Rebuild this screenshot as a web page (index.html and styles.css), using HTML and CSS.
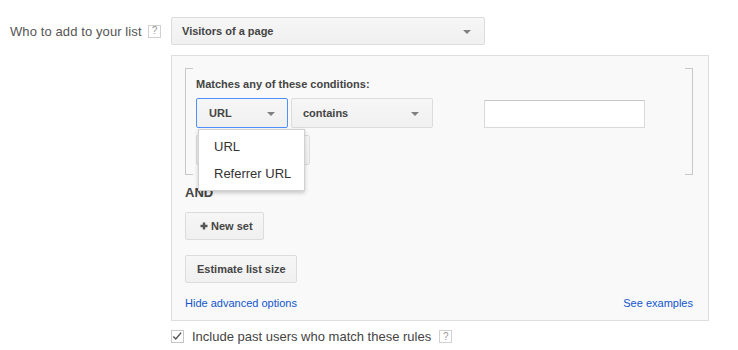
FILE: index.html
```html
<!DOCTYPE html>
<html>
<head>
<meta charset="utf-8">
<link rel="stylesheet" href="styles.css">
</head>
<body>
<div class="top-row">
  <div class="field-label"><span>Who to add to your list</span> <span class="help">?</span></div>
  <div class="select select-main"><span>Visitors of a page</span><span class="arrow"></span></div>
</div>

<div class="panel">
  <div class="rule-set">
    <div class="set-title">Matches any of these conditions:</div>
    <div class="cond-row">
      <div class="dd-wrap">
        <div class="select select-url focused"><span>URL</span><span class="arrow"></span></div>
        <div class="menu">
          <div class="menu-item">URL</div>
          <div class="menu-item">Referrer URL</div>
        </div>
      </div>
      <div class="select select-op"><span>contains</span><span class="arrow"></span></div>
      <input class="text-input" type="text">
    </div>
    <div class="or-row"><div class="btn btn-or"></div></div>
  </div>

  <div class="and-label">AND</div>
  <div class="btn btn-newset"><svg class="plus" width="8" height="8" viewBox="0 0 8 8"><path d="M4 0.5 V7.5 M0.5 4 H7.5" stroke="#555" stroke-width="2.4"/></svg>New set</div>
  <div class="btn btn-estimate">Estimate list size</div>

  <div class="links">
    <a class="link" href="#">Hide advanced options</a>
    <a class="link" href="#">See examples</a>
  </div>
</div>

<div class="check-row">
  <span class="checkbox">
    <svg width="13" height="13" viewBox="0 0 13 13"><path d="M2.5 6.5 L5.2 9.2 L11 2.3" fill="none" stroke="#555" stroke-width="1.6"/></svg>
  </span>
  <span class="check-text">Include past users who match these rules</span>
  <span class="help">?</span>
</div>
</body>
</html>
```

FILE: styles.css
```css
* { box-sizing: border-box; }
body {
  margin: 0;
  padding: 17px 0 0 10px;
  font-family: "Liberation Sans", Arial, sans-serif;
  background: #fff;
  color: #444;
}
.top-row {
  display: grid;
  grid-template-columns: 161px auto;
  align-items: center;
}
.field-label {
  font-size: 13px;
  color: #555;
  display: flex;
  align-items: center;
  justify-content: space-between;
  padding-right: 10px;
  letter-spacing: 0.1px;
}
.help {
  display: inline-flex;
  align-items: center;
  justify-content: center;
  width: 13px;
  height: 13px;
  border: 1px solid #d0d0d0;
  background: #fff;
  color: #999;
  font-size: 10px;
  line-height: 1;
  letter-spacing: 0;
}
.select {
  position: relative;
  display: flex;
  align-items: center;
  height: 28px;
  background: linear-gradient(#f6f6f6, #f0f0f0);
  border: 1px solid #dcdcdc;
  border-radius: 2px;
  font-size: 11px;
  font-weight: bold;
  color: #444;
}
.arrow {
  position: absolute;
  top: 50%;
  margin-top: -1px;
  width: 0;
  height: 0;
  border-left: 4px solid transparent;
  border-right: 4px solid transparent;
  border-top: 4px solid #808080;
}
.select-main { width: 314px; padding-left: 10px; }
.select-main .arrow { right: 13px; }
.panel {
  margin: 10px 0 0 161px;
  width: 538px;
  background: #f9f9f9;
  border: 1px solid #dedede;
  padding: 12px 15px 10px 13px;
}
.rule-set {
  position: relative;
  height: 107px;
  padding: 9px 10px 0 11px;
}
.rule-set::before, .rule-set::after {
  content: "";
  position: absolute;
  top: 0;
  bottom: 0;
  width: 7px;
  border: 1px solid #c8c8c8;
}
.rule-set::before { left: 0; border-right: none; }
.rule-set::after { right: 0; border-left: none; }
.set-title {
  font-size: 11px;
  font-weight: bold;
  line-height: 14px;
  color: #444;
}
.cond-row {
  display: flex;
  align-items: flex-start;
  margin-top: 7px;
}
.dd-wrap { position: relative; }
.select-url { width: 92px; height: 30px; padding-left: 12px; }
.select-url .arrow { right: 12px; }
.focused { border-color: #4d90fe; }
.select-op { width: 142px; height: 30px; margin-left: 3px; padding-left: 11px; }
.select-op .arrow { right: 13px; }
.text-input {
  margin: 2px 0 0 51px;
  width: 161px;
  height: 28px;
  border: 1px solid #d9d9d9;
  border-top-color: #c8c8c8;
  background: #fff;
  padding: 0;
}
.menu {
  position: absolute;
  left: 2px;
  top: 31px;
  width: 107px;
  background: #fff;
  border: 1px solid rgba(0,0,0,0.18);
  box-shadow: 0 2px 4px rgba(0,0,0,0.2);
  padding: 3px 0;
  z-index: 5;
}
.menu-item {
  height: 27px;
  line-height: 27px;
  padding-left: 15px;
  font-size: 13px;
  color: #333;
}
.or-row { margin-top: 7px; }
.btn {
  display: flex;
  align-items: center;
  height: 28px;
  background: linear-gradient(#f6f6f6, #f0f0f0);
  border: 1px solid #dcdcdc;
  border-radius: 2px;
  font-size: 11px;
  font-weight: bold;
  color: #444;
}
.btn-or { width: 114px; height: 30px; }
.plus { display: block; margin-right: 3px; }
.and-label {
  margin-top: 10px;
  font-size: 13px;
  font-weight: bold;
  line-height: 16px;
  color: #444;
}
.btn-newset { margin-top: 11px; width: 79px; padding-left: 14px; }
.btn-estimate { margin-top: 15px; width: 112px; padding-left: 11px; }
.links {
  display: flex;
  justify-content: space-between;
  margin-top: 13px;
  font-size: 11px;
  line-height: 14px;
}
.link { color: #15c; text-decoration: none; }
.check-row {
  display: flex;
  align-items: center;
  margin: 8px 0 0 161px;
  font-size: 13px;
  color: #444;
}
.checkbox {
  display: inline-flex;
  width: 13px;
  height: 13px;
  border: 1px solid #c6c6c6;
  background: #fff;
  margin-right: 8px;
}
.checkbox svg { display: block; margin: -1px 0 0 -1px; }
.check-text { margin-right: 8px; }
```
